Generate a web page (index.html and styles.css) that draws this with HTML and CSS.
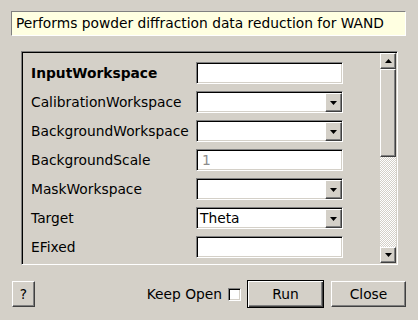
FILE: index.html
```html
<!DOCTYPE html>
<html>
<head>
<meta charset="utf-8">
<title>WAND reduction</title>
<link rel="stylesheet" href="styles.css">
</head>
<body>
<div class="dialog">
  <div class="desc">Performs powder diffraction data reduction for WAND</div>
  <div class="frame">
    <div class="props">
      <span class="lbl bold">InputWorkspace</span>
      <div class="field"></div>
      <span class="lbl">CalibrationWorkspace</span>
      <div class="field combo"><span class="val"></span><span class="drop raised"><svg width="7" height="4" viewBox="0 0 7 4"><polygon points="0,0 7,0 3.5,4" fill="#000"/></svg></span></div>
      <span class="lbl">BackgroundWorkspace</span>
      <div class="field combo"><span class="val"></span><span class="drop raised"><svg width="7" height="4" viewBox="0 0 7 4"><polygon points="0,0 7,0 3.5,4" fill="#000"/></svg></span></div>
      <span class="lbl">BackgroundScale</span>
      <div class="field muted">1</div>
      <span class="lbl">MaskWorkspace</span>
      <div class="field combo"><span class="val"></span><span class="drop raised"><svg width="7" height="4" viewBox="0 0 7 4"><polygon points="0,0 7,0 3.5,4" fill="#000"/></svg></span></div>
      <span class="lbl">Target</span>
      <div class="field combo"><span class="val">Theta</span><span class="drop raised"><svg width="7" height="4" viewBox="0 0 7 4"><polygon points="0,0 7,0 3.5,4" fill="#000"/></svg></span></div>
      <span class="lbl">EFixed</span>
      <div class="field"></div>
    </div>
    <div class="vscroll">
      <div class="sbtn raised"><svg width="7" height="4" viewBox="0 0 7 4"><polygon points="0,4 7,4 3.5,0" fill="#000"/></svg></div>
      <div class="thumb raised"></div>
      <div class="trough"></div>
      <div class="sbtn raised"><svg width="7" height="4" viewBox="0 0 7 4"><polygon points="0,0 7,0 3.5,4" fill="#000"/></svg></div>
    </div>
  </div>
  <div class="actions">
    <button class="btn help">?</button>
    <span class="keep">Keep Open</span>
    <span class="check"></span>
    <button class="btn default">Run</button>
    <button class="btn close">Close</button>
  </div>
</div>
</body>
</html>
```
FILE: styles.css
```css
* { box-sizing: border-box; }
html, body { margin: 0; padding: 0; }
body {
  background: #d4d0c8;
  width: 418px;
  height: 320px;
  overflow: hidden;
  font-family: "DejaVu Sans", "Liberation Sans", sans-serif;
  font-size: 13.8px;
  color: #000;
}
.dialog { padding: 11px 12px 0 11px; }
.desc {
  height: 25px;
  background: #ffffe1;
  border: 1px solid;
  border-color: #808080 #ffffff #ffffff #808080;
  padding-left: 4px;
  line-height: 22px;
  white-space: nowrap;
}
.frame {
  margin: 15px 0 0 10px;
  width: 377px;
  height: 214px;
  display: flex;
  border: 1px solid;
  border-color: #808080 #ffffff #ffffff #808080;
  box-shadow: inset 1px 1px 0 #000, inset -1px -1px 0 #d4d0c8;
  padding: 1px;
}
.props {
  flex: 1;
  display: grid;
  grid-template-columns: 165px 147px;
  grid-auto-rows: 22px;
  row-gap: 7px;
  align-content: start;
  align-items: center;
  padding: 9px 0 0 8px;
}
.lbl { white-space: nowrap; }
.bold { font-weight: bold; }
.field {
  height: 22px;
  background: #fff;
  border: 1px solid;
  border-color: #808080 #ffffff #ffffff #808080;
  box-shadow: inset 1px 1px 0 #000, inset -1px -1px 0 #d4d0c8;
  padding-left: 3px;
  line-height: 20px;
}
.muted { color: #8c8c8c; padding-left: 5px; }
.combo {
  display: flex;
  align-items: flex-start;
  padding: 1px 0 0 3px;
}
.combo .val { flex: 1; line-height: 19px; }
.raised {
  background: #d4d0c8;
  border: 1px solid;
  border-color: #ffffff #404040 #404040 #ffffff;
  box-shadow: inset -1px -1px 0 #808080;
}
.drop {
  width: 17px;
  height: 19px;
  display: flex;
  align-items: center;
  justify-content: center;
}
.vscroll {
  width: 16px;
  display: flex;
  flex-direction: column;
}
.sbtn {
  height: 16px;
  display: flex;
  align-items: center;
  justify-content: center;
}
.thumb { height: 88px; }
.trough {
  flex: 1;
  background: repeating-conic-gradient(#ffffff 0 25%, #d4d0c8 0 50%) 0 0 / 2px 2px;
}
.actions {
  display: flex;
  align-items: center;
  margin-top: 15px;
  height: 28px;
}
.btn {
  font-family: "DejaVu Sans", "Liberation Sans", sans-serif;
  font-size: 13.8px;
  color: #000;
  background: #d4d0c8;
  border: 1px solid;
  border-color: #ffffff #404040 #404040 #ffffff;
  box-shadow: inset -1px -1px 0 #808080;
  padding: 0;
  margin: 0;
  height: 26px;
}
.help { width: 23px; margin-left: 1px; }
.keep { margin-left: auto; }
.check {
  width: 13px;
  height: 13px;
  margin: 0 6px 0 6px;
  background: #fff;
  border: 1px solid;
  border-color: #808080 #ffffff #ffffff #808080;
  box-shadow: inset 1px 1px 0 #000, inset -1px -1px 0 #d4d0c8;
}
.default {
  width: 77px;
  height: 28px;
  border: 1px solid #000;
  box-shadow: inset 1px 1px 0 #ffffff, inset -1px -1px 0 #404040, inset -2px -2px 0 #808080;
}
.close { width: 75px; margin-left: 7px; }
```
